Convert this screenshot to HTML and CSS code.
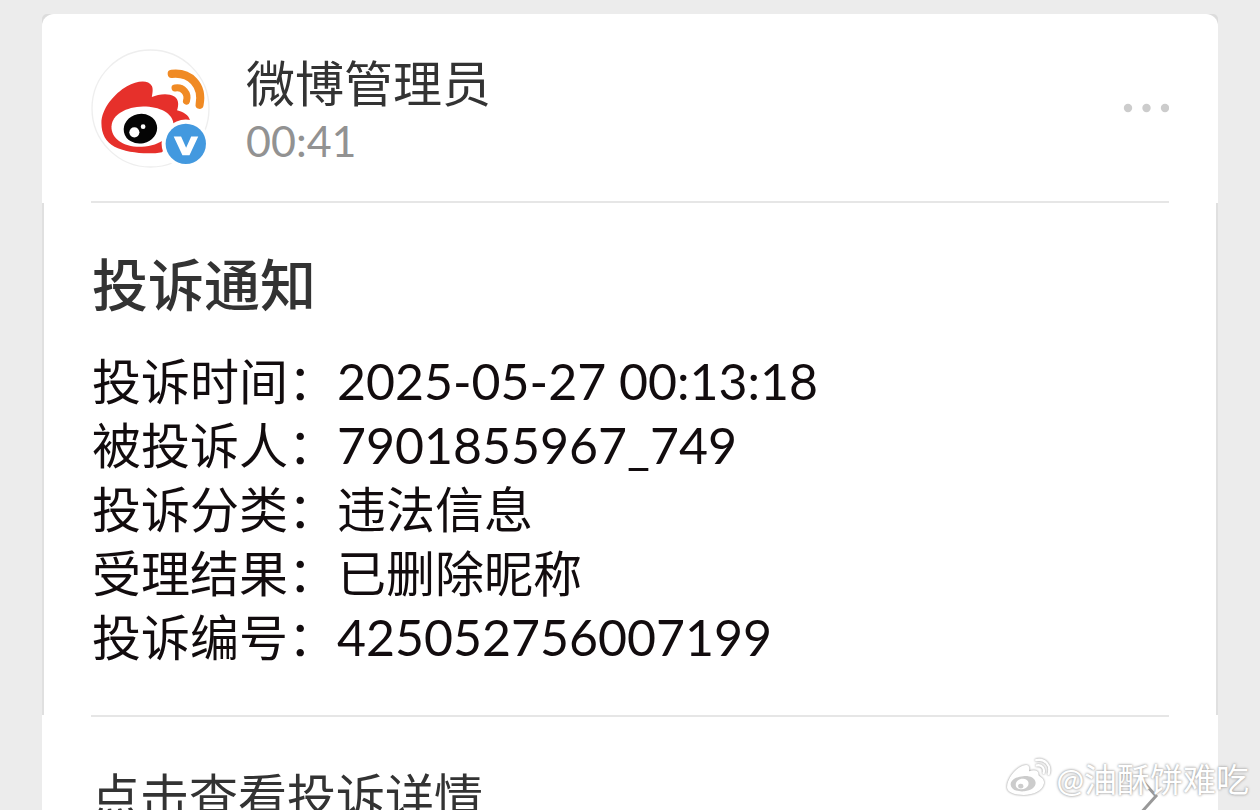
FILE: index.html
```html
<!DOCTYPE html>
<html lang="zh-CN">
<head>
<meta charset="utf-8">
<meta name="viewport" content="width=device-width, initial-scale=1">
<title>投诉通知</title>
<link rel="stylesheet" href="styles.css">
</head>
<body>
<main class="card">
  <div class="sheet">
  <header class="sender">
    <svg class="avatar" viewBox="35 27 354 354" aria-hidden="true">
      <circle cx="212" cy="204" r="174" fill="#fff" stroke="#eee" stroke-width="4"/>
      <path fill="#e6302b" d="M66 248C66 205 104 160 142 138C172 121 205 117 216 137C221 147 217 162 216 170C235 161 265 157 283 168C297 178 296 194 291 209C310 214 326 223 330 240L246 334C205 342 140 336 105 318C79 304 66 279 66 248Z"/>
      <path fill="#fff" d="M96 257C98 222 139 199 190 198C240 198 277 218 280 248C282 284 242 315 186 318C132 320 94 294 96 257Z"/>
      <ellipse cx="182" cy="264" rx="50" ry="44" transform="rotate(-12 182 264)" fill="#050505"/>
      <circle cx="164" cy="275" r="15" fill="#fff"/>
      <circle cx="190" cy="258" r="7" fill="#fff"/>
      <path fill="none" stroke="#f08a24" stroke-width="24" stroke-linecap="round" d="M275 101C330 95 369 135 358 193"/>
      <path fill="none" stroke="#f08a24" stroke-width="21" stroke-linecap="round" d="M285 143C308 139 326 158 319 182"/>
      <circle cx="317" cy="309" r="72" fill="#fff"/>
      <circle cx="317" cy="309" r="60" fill="#4399df"/>
      <path fill="#fff" d="M281 287H303L318 321L333 287H354L328 343H307Z"/>
    </svg>
    <div class="who">
      <h1 class="name">微博管理员</h1>
      <time class="time">00:41</time>
    </div>
    <button class="more" type="button" aria-label="更多">
      <svg class="dots" viewBox="0 0 46 10" aria-hidden="true">
        <circle cx="5" cy="5" r="4.2"/><circle cx="23.5" cy="5" r="4.2"/><circle cx="42" cy="5" r="4.2"/>
      </svg>
    </button>
  </header>
  </div>
  <section class="notice">
    <h2 class="title">投诉通知</h2>
    <dl class="fields">
      <dt>投诉时间：</dt><dd>2025-05-27 00:13:18</dd>
      <dt>被投诉人：</dt><dd>7901855967_749</dd>
      <dt>投诉分类：</dt><dd class="han">违法信息</dd>
      <dt>受理结果：</dt><dd class="han">已删除昵称</dd>
      <dt>投诉编号：</dt><dd>425052756007199</dd>
    </dl>
  </section>
  <a class="detail" href="#detail">
    <span>点击查看投诉详情</span>
    <svg class="chevron" viewBox="0 0 24 44" aria-hidden="true"><path d="M3 3L20 22L3 41"/></svg>
  </a>
</main>
<div class="watermark">
  <svg class="mark" viewBox="45 55 140 116" aria-hidden="true">
    <path class="solid" d="M51 145C51 117 82 80 108 79C119 79 118 91 117 97C131 92 146 93 145 108C144 113 164 116 161 134C157 155 132 168 101 168C70 168 51 158 51 145Z"/>
    <path class="iris" d="M62 138C64 153 84 159 103 157C124 155 138 143 136 130C134 116 117 110 99 112C77 114 60 125 62 138Z"/>
    <path class="solid" fill-rule="evenodd" d="M77 139C77 126 88 119 100 120C112 121 118 130 114 140C107 155 78 154 77 139ZM84 142A8 7 0 1 0 100 141A8 7 0 1 0 84 142Z"/>
    <path class="wave" d="M138 64C163 59 183 79 175 105M140 80C154 77 164 88 160 102"/>
  </svg>
  <span>@油酥饼难吃</span>
</div>
</body>
</html>
```
FILE: styles.css
```css
* {
  box-sizing: border-box;
}

body {
  position: relative;
  height: 100vh;
  margin: 0;
  padding: 14px 42px 0;
  overflow: hidden;
  background: #ececec;
  font-family: Lato, "Noto Sans CJK SC", sans-serif;
  color: #333;
}

h1, h2, dl, dd {
  margin: 0;
  font-weight: 400;
}

.card {
  background: #dcdcdc;
  border-radius: 5px 5px 0 0;
}

.sheet {
  padding: 0 49px;
  background: #fff;
  border-radius: 12px 12px 0 0;
}

.sender {
  display: flex;
  align-items: flex-start;
  height: 189px;
  padding-top: 35px;
  border-bottom: 2px solid #e6e6e6;
}

.avatar {
  flex: none;
  width: 119px;
  height: 119px;
}

.who {
  flex: 1;
  padding: 4px 0 0 36px;
}

.name {
  font-size: 49px;
  line-height: 60px;
}

.time {
  display: block;
  font-size: 43px;
  line-height: 56px;
  color: #929292;
}

.more {
  height: 118px;
  padding: 0;
  border: 0;
  background: none;
}

.dots {
  display: block;
  width: 46px;
  height: 10px;
  fill: #ccc;
}

.notice {
  padding: 48px 47px 46px 48px;
  border: 0 solid #e0e0e0;
  border-width: 0 2px;
  background: #fff;
}

.title {
  font-size: 56px;
  font-weight: 500;
  line-height: 67px;
}

.fields {
  display: grid;
  grid-template-columns: auto 1fr;
  grid-auto-rows: 64px;
  padding-top: 31px;
  font-size: 49px;
  line-height: 64px;
  color: #120c0e;
}

.fields dd {
  font-size: 50px;
}

.fields .han {
  font-size: 49px;
}

.detail {
  display: flex;
  align-items: center;
  justify-content: space-between;
  height: 162px;
  padding: 0 58px 0 49px;
  background: linear-gradient(#e6e6e6, #e6e6e6) 49px 0 / calc(100% - 98px) 2px no-repeat #fff;
  font-size: 49px;
  line-height: 64px;
  color: #333;
  text-decoration: none;
}

.chevron {
  width: 24px;
  height: 44px;
  fill: none;
  stroke: #999;
  stroke-width: 3;
}

.watermark {
  position: absolute;
  right: 11px;
  bottom: 9px;
  display: flex;
  align-items: center;
  gap: 4px;
  font-family: Lato, "Noto Sans CJK SC", sans-serif;
  font-size: 33px;
  line-height: 44px;
  color: #fff;
  text-shadow: 0 0 3px #999, 0 0 2px #bbb;
}

.mark {
  width: 47px;
  height: 39px;
  margin-bottom: 5px;
  filter: drop-shadow(0 0 1px #888);
}

.solid {
  fill: #fff;
}

.iris {
  fill: #ccc;
}

.wave {
  fill: none;
  stroke: #fff;
  stroke-width: 7;
  stroke-linecap: round;
}
```
